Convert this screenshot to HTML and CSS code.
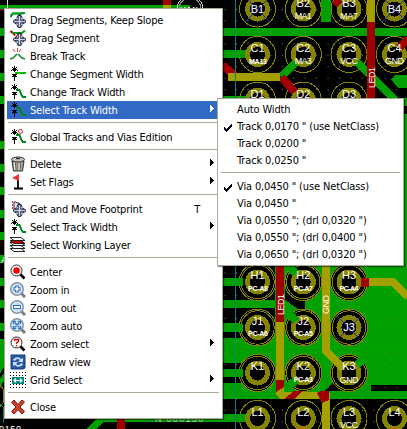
FILE: index.html
```
<!DOCTYPE html>
<html lang="en">
<head>
<meta charset="utf-8">
<title>Board editor</title>
<link rel="stylesheet" href="styles.css">
</head>
<body>
<main class="editor">
<svg class="board" width="407" height="429" viewBox="0 0 407 429">
  <defs>
    <pattern id="grid" x="236" y="9" width="11.45" height="11.45" patternUnits="userSpaceOnUse"><rect width="1" height="1" fill="#848484"/></pattern>
    <g id="pad"><circle r="18" class="ring"/><circle r="10" class="land"/></g>
    <g id="clear"><circle r="19" fill="#000"/><circle r="16.7" class="ring"/><circle r="18.5" class="ring"/><circle r="10" class="land"/></g>
  </defs>
  <rect width="407" height="429" fill="#000"/>
  <g fill="#00a000">
    <path d="M0 5H190V9H0zM0 28h5v8H0zM0 50h5v8H0zM0 73h5v8H0zM0 96h5v8H0zM0 141h5v8H0zM0 164h5v8H0zM0 187h5v8H0zM0 210h5v8H0zM0 232h5v8H0zM0 255h5v8H0zM0 278h5v8H0zM0 300h5v8H0zM0 323h5v8H0zM0 339h5v26l-5 9z"/>
    <path d="M0 379l5-7v8l-5 7zM86 429l12-12h125v5H103l-7 7z"/>
    <path d="M223 28H407v8H223zM223 50h24v8h-24zM223 96h24v8h-24zM223 414h34v8h-34zM321 0h10v22h-10zM391 79l5-4h11v13h-9z"/>
    <rect x="223" y="265" width="184" height="134"/>
    <rect x="403" y="98" width="4" height="170"/>
  </g>
  <path d="M223 265h52v13h-52zM223 286h52v14h-52zM223 308h52v15h-52zM223 331h34v7h-34zM223 363h32v6h-32zM223 377h28v6h-28zM223 399h184v30H223zM371 385h36v6h-36zM325 391l16-17 13 17zM285 277l20 25v12l-20-14zM403 106h4v8h-4z"/>
  <path d="M223 391H407v8H223zM223 414h30v8h-30z" fill="#00a000"/>
  <rect x="223" width="184" height="429" fill="url(#grid)"/>
  <g>
    <use href="#pad" x="257.5" y="9"/><use href="#pad" x="303.3" y="9"/><use href="#pad" x="349" y="9"/><use href="#pad" x="394.5" y="9"/>
    <use href="#pad" x="257.5" y="54.5"/><use href="#pad" x="303.3" y="54.5"/><use href="#pad" x="349" y="54.5"/><use href="#pad" x="394.5" y="54.5"/>
    <use href="#pad" x="257.5" y="100"/><use href="#pad" x="303.3" y="100"/><use href="#pad" x="349" y="100"/>
    <use href="#clear" x="257.5" y="282"/><use href="#clear" x="303.3" y="282"/><use href="#clear" x="349" y="282"/>
    <use href="#clear" x="257.5" y="327.5"/><use href="#clear" x="303.3" y="327.5"/><use href="#clear" x="349" y="327.5"/>
    <use href="#clear" x="257.5" y="373"/><use href="#clear" x="303.3" y="373"/><use href="#clear" x="349" y="373"/>
    <use href="#pad" x="257.5" y="418.5"/><use href="#pad" x="303.3" y="418.5"/><use href="#pad" x="349" y="418.5"/><use href="#pad" x="394.5" y="418.5"/>
  </g>
  <g class="track green">
    <path d="M281 77l14-14M357 62l40 40M223 54h20M223 282h20M223 327.500h20M223 373h20M223 418h20"/>
    <path d="M290 267l6 7M287 311l9 10M289 386l7-6M357 365l8-7"/>
  </g>
  <g class="track red">
    <path d="M223 65l13 12M281 77l14 15M371 22V98M280 265v57M399 48l9-9M167 0V9M121 418v12M335 0l5 5"/>
  </g>
  <g class="track yellow">
    <path d="M228 77h52M371 0v22M280 322v58M326 265v86l18 18M364 282h29l15 15M326 401v28M167 5v4"/>
    <path d="M302 427v3M394 427v3" stroke="#b47000"/>
  </g>
  <path d="M276 380h8v12h37l9 1v12l-8-6H280l-4-4z" fill="#a4a000"/>
  <path d="M276 380h8v7l-8 5zM284 399l10-8h8l-8 8zM317 393l4-2h8v9l-7 3z" fill="#a00000"/>
  <path d="M363 278v8M368 278v8M361 278h7v8h-7" stroke="#a00000" fill="#a00000"/>
  <path d="M235.500 0V429" stroke="#008484" fill="none"/>
  <path d="M0 9.500h5" stroke="#a000a0"/>
  <path d="M7.500 0v8" stroke="#ddd"/>
  <circle cx="190" cy="9" r="13" fill="none" stroke="#ccc"/><circle cx="190" cy="9" r="11" fill="none" stroke="#888"/>
  <path d="M0 385l3 4v14l-3 4" stroke="#848400" fill="none"/><path d="M0 404l3 3v16" stroke="#008484" fill="none"/>
  <g stroke="#2020c0" fill="none"><path d="M245-3l25 25M270-3l-25 25M382-3l25 25M407-3l-25 25M337 316l24 24M361 316l-24 24"/></g>
  <g class="names">
    <text x="257.500" y="13">B1</text><text x="303.300" y="7">B2</text><text x="349" y="7">B3</text><text x="394.500" y="13">B4</text>
    <text x="257.500" y="52">C1</text><text x="303.300" y="52">C2</text><text x="349" y="52">C3</text><text x="394.500" y="52">C4</text>
    <text x="257.500" y="97.500">D1</text><text x="303.300" y="97.500">D2</text><text x="349" y="97.500">D3</text>
    <text x="257.500" y="279">H1</text><text x="303.300" y="279">H2</text><text x="349" y="279">H3</text>
    <text x="257.500" y="325">J1</text><text x="303.300" y="325">J2</text><text x="349" y="331">J3</text>
    <text x="257.500" y="370">K1</text><text x="303.300" y="370">K2</text><text x="349" y="370">K3</text>
    <text x="257.500" y="416">L1</text><text x="303.300" y="416">L2</text><text x="349" y="416">L3</text><text x="394.500" y="416">L4</text>
  </g>
  <g class="nets">
    <text x="303.300" y="19" textLength="17">MA1</text><text x="349" y="19" textLength="18">MA7</text>
    <text x="258" y="64" class="tiny" textLength="18">MA13</text><text x="303.300" y="64" textLength="17">MA3</text><text x="349" y="64" textLength="18">VCC</text><text x="394.500" y="64" textLength="19">GND</text>
    <text x="349" y="383" textLength="19">GND</text><text x="349" y="428" textLength="18">VCC</text>
  </g>
  <g class="nets tiny">
    <text x="258" y="291" textLength="20">PC-A8</text><text x="303.300" y="291" textLength="19">PC-A7</text><text x="349" y="291" textLength="19">PC-A4</text>
    <text x="258" y="336" textLength="20">PC-A6</text><text x="303.300" y="336" textLength="19">PC-A5</text><text x="303.300" y="382" textLength="19">PC-A3</text>
  </g>
  <g class="nets">
    <text transform="translate(375 77.500) rotate(-90)" textLength="21">LED1</text>
    <text transform="translate(284 304.500) rotate(-90)" textLength="21">LED1</text>
    <text transform="translate(329 304.500) rotate(-90)" textLength="19">GND</text>
    <text x="10" y="432" textLength="22">0150</text><text x="179" y="422" textLength="48" fill="#ccc">N 000150</text>
    <text x="4" y="263">A</text><text x="190" y="13" textLength="19">WMA</text>
  </g>
</svg>

<svg class="symbols" width="0" height="0">
  <defs>
    <g id="width" shape-rendering="crispEdges"><path d="M4 0h1v6H4zM3 4h3v1H3zM2 3h5v1H2zM2 1h1v1H2zM6 1h1v1H6zM1 4h1v1H1zM7 4h1v1H7zM4 8h1v7H4zM3 9h3v1H3zM2 10h5v1H2zM2 8h5v1H2zM3 2h3v1H3z"/></g>
    <g id="move"><path d="M9.500 3.200v12.300M3.500 9.500h12" stroke="#182040" stroke-width="3.600"/><path d="M9.500 2l3.500 3.500H6zM9.500 16.500L6 13.500h7zM3 9.500L6.500 6v7zM16 9.500L12.500 6v7z" fill="#182040"/><path d="M9.500 4v11M4 9.500h11" stroke="#ccd4f0" stroke-width="1.700"/></g>
    <g id="curve"><path d="M6 6h3.500l2 5 1.500 2h3" stroke="#008420" stroke-width="2" fill="none"/></g>
    <g id="lens"><circle cx="6.500" cy="6.500" r="5.500" fill="#fff" stroke="#222"/><path d="M10.500 10.500l4 4" stroke="#000" stroke-width="2.600"/></g>
    <g id="zoom"><path d="M11 11l4 4" stroke="#777e80" stroke-width="3"/><circle cx="7" cy="7" r="6.200" fill="#bcdcfa" stroke="#8c9aa2" stroke-width="1.700"/><circle cx="7" cy="7" r="4.800" fill="none" stroke="#e3f2ff"/></g>
    <symbol id="i-drags" viewBox="0 0 16 16"><path d="M0 5l3-3.500h8l4-1" stroke="#00a020" stroke-width="2.500" fill="none"/><use href="#move"/></symbol>
    <symbol id="i-drag" viewBox="0 0 16 16"><path d="M1 1l2 2h9l3-2.500" stroke="#00a020" stroke-width="2" fill="none"/><use href="#move"/><path d="M0 1l7 6" stroke="#e00000" stroke-width="1.600" stroke-dasharray="3 1"/></symbol>
    <symbol id="i-break" viewBox="0 0 16 16"><path d="M0 11l3-1 4-4M15 11l-3-1-4-4" stroke="#209040" stroke-width="1.700" fill="none"/><path d="M3 1l2 3M7.500 0v4M11 1L9 4" stroke="#e04040" fill="none"/></symbol>
    <symbol id="i-seg" viewBox="0 0 16 16"><use href="#width"/><path d="M5 7h11" stroke="#00c000" stroke-width="2"/></symbol>
    <symbol id="i-track" viewBox="0 0 16 16"><use href="#width"/><use href="#curve"/></symbol>
    <symbol id="i-global" viewBox="0 0 16 16"><use href="#width"/><use href="#curve"/><circle cx="10.500" cy="2.500" r="2" fill="#fff" stroke="#f02020"/></symbol>
    <symbol id="i-trash" viewBox="0 0 16 16"><path d="M2 5h12l-1.500 10h-9z" fill="#aaa89c" stroke="#302e28"/><path d="M5.500 7l.5 7M8 7v7M10.500 7l-.5 7" stroke="#5c5a50"/><path d="M4.300 7l.6 7M9 7v7" stroke="#eee"/><ellipse cx="8" cy="3.500" rx="6.500" ry="2.500" fill="#c8c6bb" stroke="#302e28"/><path d="M6 2.500h4" stroke="#333" stroke-width="1.500"/></symbol>
    <symbol id="i-flag" viewBox="0 0 16 16"><path d="M8 2v12M4 14.500h9" stroke="#000" stroke-width="1.800"/><path d="M9 0v7L2 4z" fill="#ee3038"/></symbol>
    <symbol id="i-foot" viewBox="0 0 16 16"><path d="M2.500 0v9" stroke="#e02020" stroke-dasharray="2 1"/><path d="M4 9V1h2l1 1h2V8z" fill="#e4e8f6" stroke="#282c40"/><use href="#move"/></symbol>
    <symbol id="i-layers" viewBox="0 0 16 16"><g stroke="#111" stroke-width=".9"><path d="M0 11.500h11l4 3H4z" fill="#fff"/><path d="M0 8.500h11l4 3H4z" fill="#fff"/><path d="M0 5.500h11l4 3H4z" fill="#fff"/><path d="M0 3.500h11l4 3H4z" fill="#c00000"/><path d="M0 .5h11l4 3H4z" fill="#fff"/></g></symbol>
    <symbol id="i-center" viewBox="0 0 16 16"><use href="#lens"/><circle cx="6.500" cy="6.500" r="3.300" fill="#f00"/></symbol>
    <symbol id="i-in" viewBox="0 0 16 16"><use href="#zoom"/><path d="M7 3.500v7M3.500 7h7" stroke="#3470c0" stroke-width="3.400"/><path d="M7 4.500v5M4.500 7h5" stroke="#fff" stroke-width="1.500"/></symbol>
    <symbol id="i-out" viewBox="0 0 16 16"><use href="#zoom"/><rect x="3.500" y="5.500" width="7" height="3" fill="#fff" stroke="#3470c0"/></symbol>
    <symbol id="i-auto" viewBox="0 0 16 16"><use href="#zoom"/><path d="M3.500 6V3.500H6M8 3.500h2.500V6M10.500 8v2.500H8M6 10.500H3.500V8M5 5l4 4M9 5L5 9" stroke="#3470c0" stroke-width="1.300" fill="none"/></symbol>
    <symbol id="i-select" viewBox="0 0 16 16"><use href="#lens"/><path d="M4.500 5V3.500h4v2L6.500 7v1M6.500 9v1.500" stroke="#e00000" stroke-width="1.400" fill="none"/></symbol>
    <symbol id="i-redraw" viewBox="0 0 16 16"><path d="M1 1h14v13l-2 1H1z" fill="#2856a0" stroke="#163c80"/><path d="M3 6c1-3 6-4 8-1l2-1v4H8l2-2C8 4 6 5 5 7zM13 10c-1 3-6 4-8 1l-2 1V8h5l-2 2c2 2 4 1 5-1z" fill="#c8def6"/></symbol>
    <symbol id="i-grid" viewBox="0 0 16 16"><path d="M0 .5h16M0 3.500h16M0 12.500h16M0 15.500h16" stroke="#000" stroke-dasharray="1 2"/><path d="M.5 0v16M15.500 0v16" stroke="#000" stroke-dasharray="1 2"/><rect x="2" y="5" width="12" height="7" fill="#008484"/><path d="M4 8.500h8M6 6.500l-2 2 2 2M10 6.500l2 2-2 2" stroke="#fff" stroke-width="1.200" fill="none"/></symbol>
    <symbol id="i-close" viewBox="0 0 16 16"><path d="M1.500 3.500L4 1l4 4.500L12 1l2.500 2L10 8l4.500 4.500L12 15l-4-4.500L4 15l-2.500-2.500L6 8z" fill="#d24028" stroke="#702010"/></symbol>
    <symbol id="i-arrow" viewBox="0 0 4 7"><path d="M0 0h1v1h1v1h1v1h1v1H3v1H2v1H1v1H0z" fill="currentColor"/></symbol>
    <symbol id="i-check" viewBox="0 0 8 8"><path d="M0 3h1v1h1v1h1V4h1V3h1V2h1V1h1V0h1v3H7v1H6v1H5v1H4v1H3v1H2V7H1V6H0z"/></symbol>
  </defs>
</svg>

<nav class="menu context">
  <div class="item"><svg class="icon"><use href="#i-drags"/></svg><span class="label">Drag Segments, Keep Slope</span></div>
  <div class="item"><svg class="icon"><use href="#i-drag"/></svg><span class="label">Drag Segment</span></div>
  <div class="item"><svg class="icon"><use href="#i-break"/></svg><span class="label">Break Track</span></div>
  <div class="item"><svg class="icon"><use href="#i-seg"/></svg><span class="label">Change Segment Width</span></div>
  <div class="item"><svg class="icon"><use href="#i-track"/></svg><span class="label">Change Track Width</span></div>
  <div class="item active"><svg class="icon"><use href="#i-track"/></svg><span class="label">Select Track Width</span><svg class="arrow"><use href="#i-arrow"/></svg></div>
  <hr>
  <div class="item"><svg class="icon"><use href="#i-global"/></svg><span class="label">Global Tracks and Vias Edition</span></div>
  <hr>
  <div class="item"><svg class="icon"><use href="#i-trash"/></svg><span class="label">Delete</span><svg class="arrow"><use href="#i-arrow"/></svg></div>
  <div class="item"><svg class="icon"><use href="#i-flag"/></svg><span class="label">Set Flags</span><svg class="arrow"><use href="#i-arrow"/></svg></div>
  <hr>
  <div class="item"><svg class="icon"><use href="#i-foot"/></svg><span class="label">Get and Move Footprint</span><span class="key">T</span></div>
  <div class="item"><svg class="icon"><use href="#i-track"/></svg><span class="label">Select Track Width</span><svg class="arrow"><use href="#i-arrow"/></svg></div>
  <div class="item"><svg class="icon"><use href="#i-layers"/></svg><span class="label">Select Working Layer</span></div>
  <hr>
  <div class="item"><svg class="icon"><use href="#i-center"/></svg><span class="label">Center</span></div>
  <div class="item"><svg class="icon"><use href="#i-in"/></svg><span class="label">Zoom in</span></div>
  <div class="item"><svg class="icon"><use href="#i-out"/></svg><span class="label">Zoom out</span></div>
  <div class="item"><svg class="icon"><use href="#i-auto"/></svg><span class="label">Zoom auto</span></div>
  <div class="item"><svg class="icon"><use href="#i-select"/></svg><span class="label">Zoom select</span><svg class="arrow"><use href="#i-arrow"/></svg></div>
  <div class="item"><svg class="icon"><use href="#i-redraw"/></svg><span class="label">Redraw view</span></div>
  <div class="item"><svg class="icon"><use href="#i-grid"/></svg><span class="label">Grid Select</span><svg class="arrow"><use href="#i-arrow"/></svg></div>
  <hr>
  <div class="item"><svg class="icon"><use href="#i-close"/></svg><span class="label">Close</span></div>
</nav>

<nav class="menu sub">
  <div class="item"><span class="mark"></span><span class="label">Auto Width</span></div>
  <div class="item"><span class="mark"><svg class="check"><use href="#i-check"/></svg></span><span class="label">Track 0,0170 " (use NetClass)</span></div>
  <div class="item"><span class="mark"></span><span class="label">Track 0,0200 "</span></div>
  <div class="item"><span class="mark"></span><span class="label">Track 0,0250 "</span></div>
  <hr>
  <div class="item"><span class="mark"><svg class="check"><use href="#i-check"/></svg></span><span class="label">Via 0,0450 " (use NetClass)</span></div>
  <div class="item"><span class="mark"></span><span class="label">Via 0,0450 "</span></div>
  <div class="item"><span class="mark"></span><span class="label">Via 0,0550 "; (drl 0,0320 ")</span></div>
  <div class="item"><span class="mark"></span><span class="label">Via 0,0550 "; (drl 0,0400 ")</span></div>
  <div class="item"><span class="mark"></span><span class="label">Via 0,0650 "; (drl 0,0320 ")</span></div>
</nav>
</main>
</body>
</html>
```
FILE: styles.css
```
body { margin: 0; overflow: hidden; }
.editor { position: relative; width: 407px; height: 429px; overflow: hidden; background: #000; }
.board { display: block; shape-rendering: crispEdges; }
.symbols { position: absolute; }

.ring { fill: none; stroke: #848400; }
.land { fill: #000; stroke: #848400; stroke-width: 5px; }
.track { fill: none; stroke-width: 8px; }
.green { stroke: #00a000; }
.red { stroke: #a00000; }
.yellow { stroke: #a4a000; }
.names, .nets { fill: #fff; text-anchor: middle; font-family: "Liberation Sans", sans-serif; }
.names { font-size: 11px; }
.nets { font-size: 9px; }
.tiny { font-size: 7px; font-weight: bold; }

.menu {
  position: absolute;
  box-sizing: border-box;
  padding: 2px;
  border: 1px solid #aca899;
  background: #fff;
  box-shadow: 1px 1px 1px rgba(0, 0, 0, .45);
  color: #000;
  font: 11px/18px "DejaVu Sans Condensed", "DejaVu Sans", sans-serif;
  font-stretch: condensed;
  letter-spacing: -.14px;
}
.context { left: 4px; top: 8px; width: 219px; height: 411px; letter-spacing: -.2px; }
.sub { left: 217px; top: 98px; width: 187px; height: 168px; line-height: 17px; }
.item { display: flex; align-items: center; height: 18px; padding-left: 3px; }
.sub .item { height: 17px; padding-left: 4px; }
.active { background: #316ac5; color: #fff; }
.icon { width: 16px; height: 16px; margin-right: 4px; flex: none; }
.label { flex: 1; white-space: nowrap; }
.context .label, .key { line-height: 16px; padding-top: 2px; }
.key { margin-right: 20px; }
.arrow { width: 4px; height: 7px; margin: 0 6px 3px 0; flex: none; }
.mark { display: flex; width: 13px; flex: none; }
.check { width: 8px; height: 8px; margin-top: 2px; }
.menu hr { height: 1px; margin: 3px 1px 5px; border: 0; background: #aca899; }
```
